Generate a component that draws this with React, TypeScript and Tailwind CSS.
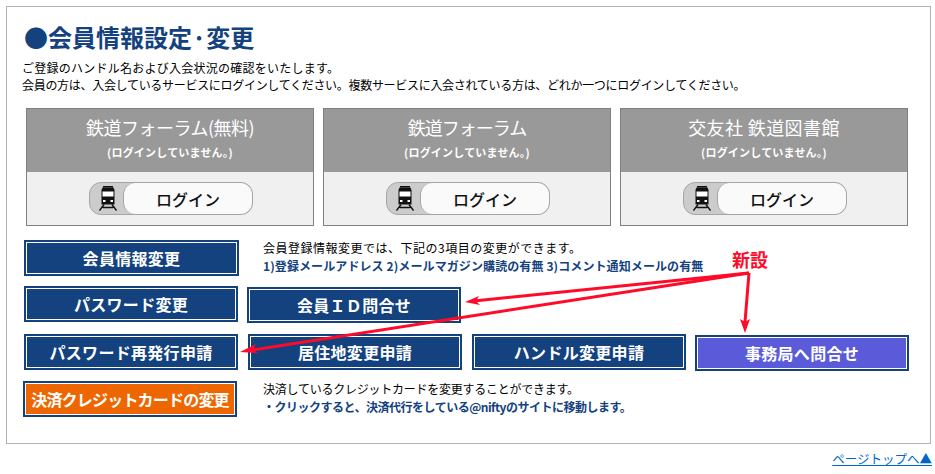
import React from 'react';

const FONT = "font-['Noto_Sans_CJK_JP','Noto_Sans',sans-serif]";

const services = [
  { name: '鉄道フォーラム(無料)', spacing: 'tracking-[-0.5px]' },
  { name: '鉄道フォーラム', spacing: 'tracking-[-1px]' },
  { name: '交友社 鉄道図書館', spacing: 'tracking-[0.4px]' },
];

const TrainIcon = () => (
  <svg width="18" height="25" viewBox="0 0 18 25" className="block">
    <path d="M3.5 1.5 H14.5 L15.5 4 V18.5 H2.5 V4 Z" fill="#111" />
    <rect x="4" y="0" width="10" height="1.5" fill="#111" />
    <rect x="3.5" y="5.5" width="11" height="5" fill="#fff" />
    <rect x="4" y="14" width="2.5" height="2" fill="#fff" />
    <rect x="11.5" y="14" width="2.5" height="2" fill="#fff" />
    <path d="M5 18.5 L0.5 24.5 M13 18.5 L17.5 24.5 M4 21.5 H14" stroke="#111" strokeWidth="1.4" fill="none" />
  </svg>
);

const ServiceCard: React.FC<{ name: string; spacing: string }> = ({ name, spacing }) => (
  <div className="w-[288px] h-[118px] border border-[#808080] bg-[#f0f0f0]">
    <div className="h-[63px] bg-[#999999] text-white text-center">
      <p className={`pt-[5px] text-[18px] leading-[27px] ${spacing}`}>{name}</p>
      <p className="mt-[3px] text-[11px] leading-[16px] font-bold tracking-[0.2px]">(ログインしていません。)</p>
    </div>
    <div className="flex pl-[62px] pt-[10px]">
      <div className="w-[164px] h-[33px] flex rounded-[12px] border border-[#a6a6a6] bg-[#cccccc]">
        <div className="w-[33px] flex items-center justify-center pl-[3px]">
          <TrainIcon />
        </div>
        <div className="flex-1 flex items-center justify-center rounded-[12px] border-l border-[#a6a6a6] bg-[#fafafa] text-[16px] font-medium text-[#111]">
          ログイン
        </div>
      </div>
    </div>
  </div>
);

interface NavButtonProps {
  label: string;
  className?: string;
  fill?: string;
  spacing?: string;
}

const NavButton: React.FC<NavButtonProps> = ({
  label,
  className = 'w-[214px]',
  fill = 'bg-[#14427f]',
  spacing = 'tracking-[0.3px]',
}) => (
  <div className={`h-[36px] p-[2px] bg-[#14427f] ${className}`}>
    <div className={`h-full flex items-center justify-center border border-white text-white text-[16px] leading-none font-bold whitespace-nowrap ${spacing} ${fill}`}>
      {label}
    </div>
  </div>
);

// red annotation lines drawn over the buttons
const Arrows = () => (
  <svg width="935" height="474" className="absolute left-0 top-0 pointer-events-none">
    <g stroke="#ff0a28" strokeWidth="3" fill="none">
      <path d="M749 273 L474 301" />
      <path d="M749 273 L252 350" />
      <path d="M749 273 L745 322" />
    </g>
    <g fill="#ff0a28">
      <path d="M465 302 L479 296 L476 301 L480 305 Z" />
      <path d="M240 352 L256 344 L253 350 L258 353 Z" />
      <path d="M745 333 L740 319 L745 322 L750 319 Z" />
    </g>
  </svg>
);

export default function App() {
  return (
    <div className={`relative w-[935px] h-[474px] overflow-hidden bg-white pl-[6px] pt-[6px] text-black ${FONT}`}>
      <div className="w-[925px] h-[438px] border border-[#b3b3b3] pt-[16px]">
        <h1 className="pl-[17px] text-[24px] leading-[28px] font-bold text-[#14427f] whitespace-nowrap">●会員情報設定·変更</h1>
        <div className="mt-[8px] pl-[15px] text-[12px] leading-[17px] whitespace-nowrap">
          <p className="tracking-[0.25px]">ご登録のハンドル名および入会状況の確認をいたします。</p>
          <p className="tracking-[-0.3px]">会員の方は、入会しているサービスにログインしてください。複数サービスに入会されている方は、どれか一つにログインしてください。</p>
        </div>

        <div className="mt-[15px] pl-[19px] flex gap-[9px]">
          {services.map(s => (
            <ServiceCard key={s.name} name={s.name} spacing={s.spacing} />
          ))}
        </div>

        <div className="mt-[14px] pl-[17px]">
          <div className="flex items-start">
            <NavButton label="会員情報変更" className="w-[215px]" />
            <div className="ml-[24px] -mt-[1px] text-[12px] leading-[17px] whitespace-nowrap">
              <p className="tracking-[0.5px]">会員登録情報変更では、下記の3項目の変更ができます。</p>
              <p className="mt-[1px] font-bold text-[#14427f] tracking-[0.1px]">1)登録メールアドレス 2)メールマガジン購読の有無 3)コメント通知メールの有無</p>
            </div>
          </div>
          <div className="mt-[10px] flex items-start">
            <NavButton label="パスワード変更" />
            <NavButton label="会員ＩＤ問合せ" className="w-[214px] ml-[9px] mt-[1px]" />
          </div>
          <div className="mt-[11px] flex items-start">
            <NavButton label="パスワード再発行申請" />
            <NavButton label="居住地変更申請" className="w-[214px] ml-[10px]" />
            <NavButton label="ハンドル変更申請" className="w-[214px] ml-[10px]" />
            <NavButton label="事務局へ問合せ" className="w-[214px] ml-[9px] mt-[1px]" fill="bg-[#5b5bd9]" />
          </div>
          <div className="mt-[10px] -ml-[1px] flex items-start">
            <NavButton label="決済クレジットカードの変更" fill="bg-[#ee6600]" spacing="tracking-[-0.8px]" />
            <div className="ml-[26px] -mt-[1px] text-[12px] leading-[17px] whitespace-nowrap">
              <p className="tracking-[-0.25px]">決済しているクレジットカードを変更することができます。</p>
              <p className="mt-[1px] font-bold text-[#14427f] tracking-[-0.5px]">・クリックすると、決済代行をしている@niftyのサイトに移動します。</p>
            </div>
          </div>
        </div>
      </div>

      <div className="flex justify-end pr-[3px] pt-[6px]">
        <a className="text-[12.5px] leading-[17px] text-[#0066cc] underline whitespace-nowrap">ページトップへ▲</a>
      </div>

      <Arrows />
      <span className="absolute left-[732px] top-[248px] text-[18px] leading-[22px] font-bold text-[#ff0a28]">新設</span>
    </div>
  );
}
